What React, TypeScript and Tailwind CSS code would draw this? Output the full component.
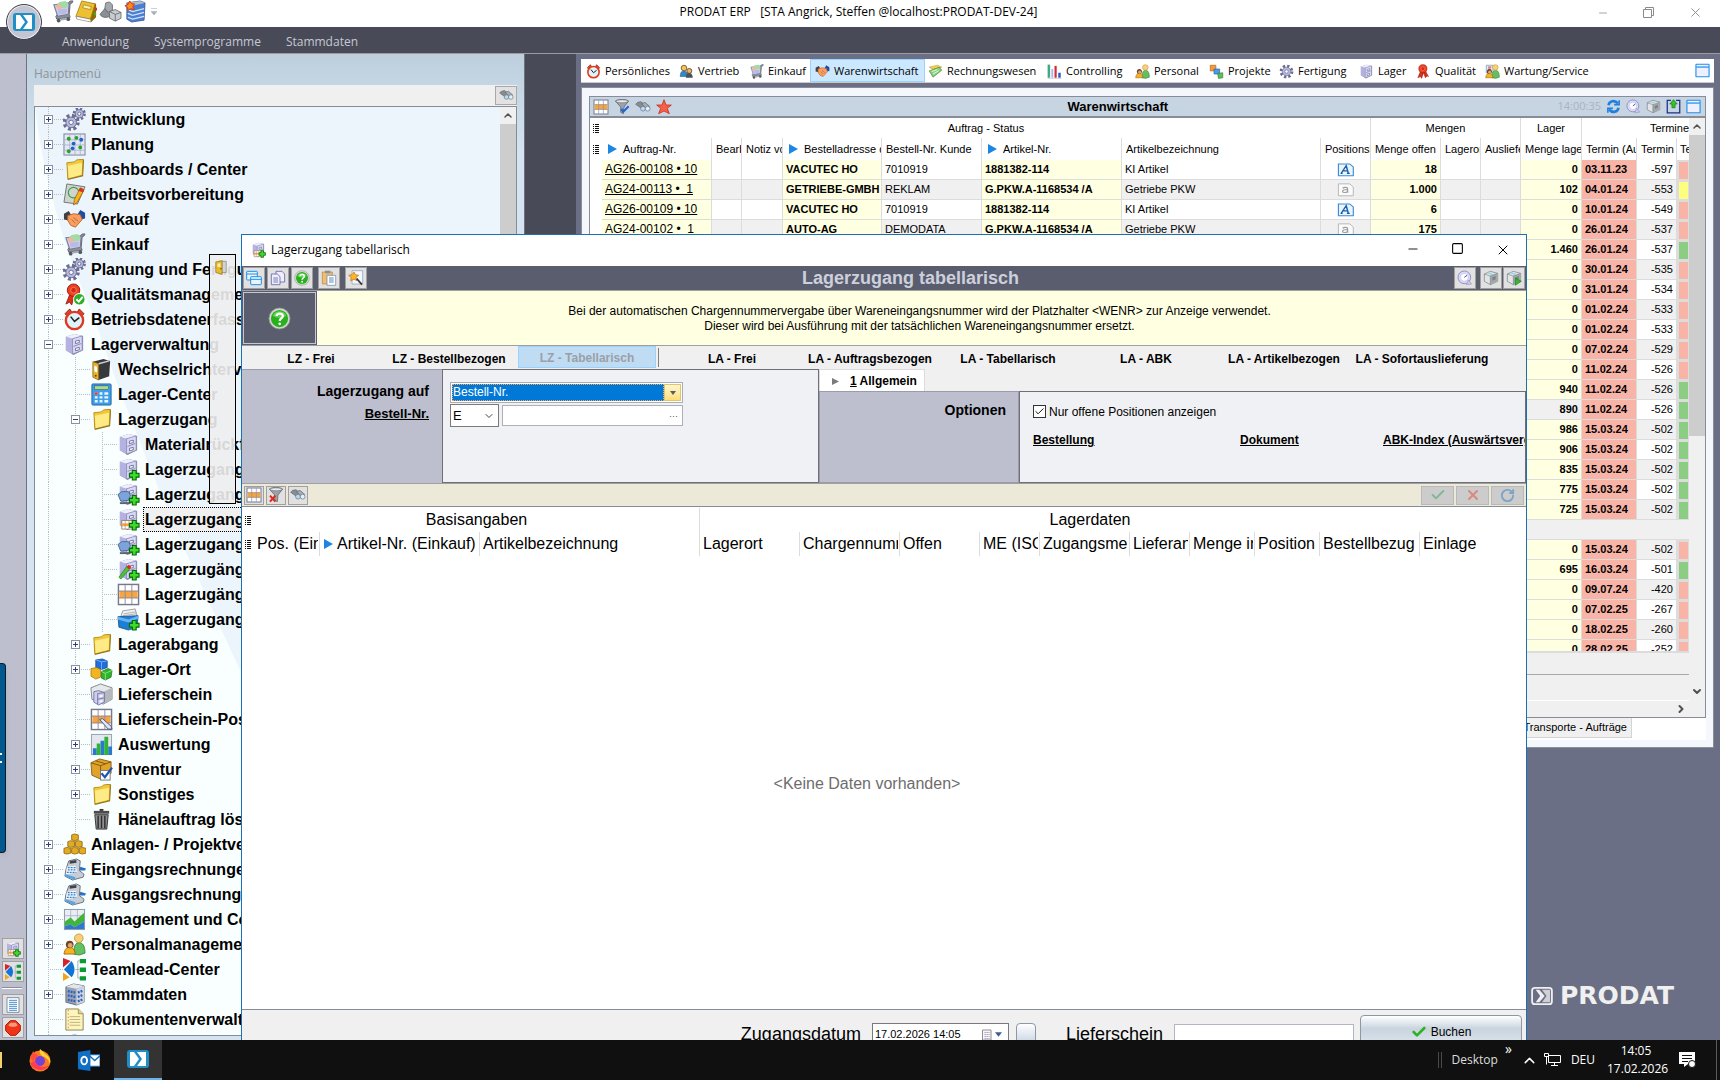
import React from 'react';
import { Check, ChevronDown, ChevronRight, ChevronUp, Minus, RotateCw, Square, X } from 'lucide-react';

/* ---------- Icon artwork (24 x 24) ---------- */

const cabinet = (
  <g>
    <path d="M3 4 12 1 21 3 21 18 11 23 3 18Z" fill="#8f90b4" />
    <path d="M3 4 10 6 10 22 3 18Z" fill="#b3b2e0" />
    <path d="M3 4 12 1 20 3 10 6Z" fill="#eeeeff" />
    <path d="M10 6 20 3 20 18 10 22Z" fill="#d9d8f8" stroke="#7f80a8" strokeWidth=".7" />
    <path d="M11 14 19 11" stroke="#8587b0" strokeWidth="1" />
    <path d="M13 8.500 17 7.500V10L13 11ZM13 16 17 15V17.500L13 18.500Z" fill="#fff" stroke="#55577c" strokeWidth=".8" />
  </g>
);

const greenPlus = (
  <path d="M16 13h4v3h3v4h-3v3h-4v-3h-3v-4h3z" fill="#3ddb2a" stroke="#0c6b0c" strokeWidth="1.2" />
);

const cart = (
  <g>
    <path d="M18 3 20 1 23 1 22 3 20 4 19 15 20 18 6 20 5 17Z" fill="#8b8f9a" stroke="#5b5f69" strokeWidth=".9" />
    <path d="M3 5 19 3 18 15 7 17Z" fill="#cfd1ea" stroke="#7a7d93" strokeWidth="1.2" />
    <path d="M5 6 9 2 15 1 18 4 17 8 7 9Z" fill="#9fdca6" />
    <path d="M5 6 10 4 11 9 7 10Z" fill="#f6b39d" />
    <path d="M7 10 17 9 16 14 8 15Z" fill="#b9bae6" />
    <circle cx="8" cy="21.500" r="2" fill="#55585f" />
    <circle cx="18" cy="20" r="2" fill="#55585f" />
    <path d="M10 20.500 16 19.500" stroke="#a6a9b2" strokeWidth="2" />
  </g>
);

const tableGrid = (
  <g>
    <rect x="1.500" y="1.500" width="21" height="21" fill="#fff" stroke="#77788c" strokeWidth="1.500" />
    <rect x="2.500" y="8" width="19" height="8" fill="#f9a53c" />
    <path d="M8.500 2v20M15.500 2v20M2 8.500h20M2 15.500h20" stroke="#8d8ea6" strokeWidth="1" />
  </g>
);

const folder = (
  <g>
    <path d="M4 5 13 4 14 2 21 1 22 2 21 19 5 23Z" fill="#8a6f1c" />
    <path d="M4 5 12 4 14 2 21 1.500 20 18 5 21.500Z" fill="#f2c93a" stroke="#b48a12" strokeWidth=".8" />
    <path d="M5 8 20 5 19.500 17.500 6 21Z" fill="#ffeb85" />
  </g>
);

const gear = (cx: number, cy: number, r: number) => (
  <g>
    <circle cx={cx} cy={cy} r={r} fill="none" stroke="#6c6d92" strokeWidth={r * 0.75} strokeDasharray={`${r * 0.42} ${r * 0.365}`} />
    <circle cx={cx} cy={cy} r={r * 0.85} fill="#b9b9dd" stroke="#6c6d92" strokeWidth="1" />
    <circle cx={cx} cy={cy} r={r * 0.35} fill="#f4f8ff" stroke="#6c6d92" strokeWidth="1" />
  </g>
);

const handshake = (
  <g>
    <path d="M1 6 6 3 9 8 6 13 1 12Z" fill="#3d4045" />
    <path d="M23 5 18 2 15 7 18 12 23 11Z" fill="#1c4da8" />
    <path d="M5 8 11 6 18 7 20 12 13 20 8 18 5 13Z" fill="#f7a062" stroke="#c4622b" strokeWidth="1" />
    <path d="M9 12 13 16M11 10 16 14" stroke="#c4622b" strokeWidth="1" />
  </g>
);

const ribbon = (
  <g>
    <path d="M7 12 3 22 7 20 9 23 12 14 15 22 18 19 20 20 15 11Z" fill="#d9301b" stroke="#8e1a0c" strokeWidth=".8" />
    <circle cx="11" cy="7.500" r="6.500" fill="#ee4023" stroke="#9c1d0d" strokeWidth="1" />
    <circle cx="11" cy="7.500" r="3" fill="#d12a15" stroke="#ff8c73" strokeWidth=".8" />
  </g>
);

const clock = (
  <g>
    <path d="M2 6 7 1 9 4 4 8ZM22 6 17 1 15 4 20 8Z" fill="#e8412a" stroke="#952012" />
    <circle cx="12" cy="13" r="9" fill="#dff3fb" stroke="#dd3a22" strokeWidth="2.500" />
    <path d="M8 9 12 14 17 10" stroke="#222" strokeWidth="1.600" fill="none" />
  </g>
);

const people = (
  <g>
    <path d="M11 22C11 12 14 10 17 10s6 3 6 11l-6 2Z" fill="#63bf5f" stroke="#2f7d32" strokeWidth=".8" />
    <circle cx="16.500" cy="5.500" r="4.500" fill="#f8cf7a" stroke="#c18f25" strokeWidth=".8" />
    <path d="M1 22C2 16 4 15 7 15s5 2 6 7Z" fill="#f2b51d" stroke="#a0520d" strokeWidth=".8" />
    <circle cx="7" cy="12" r="4" fill="#6c4526" />
    <circle cx="7.500" cy="13" r="2.500" fill="#e5a468" />
  </g>
);

const register = (
  <g>
    <path d="M6 3 14 1 18 3 17 13 22 17 21 20 10 23 2 19 3 12Z" fill="#c8ccd4" stroke="#5e6470" strokeWidth=".9" />
    <path d="M7 3 14 2 14 5 7 6Z" fill="#3e434b" />
    <path d="M4 9 13 8 15 15 3 17Z" fill="#f7f9fc" />
    <path d="M5 10h8M5 12.500h9M4 15h10" stroke="#2f7fd0" strokeWidth="1.300" strokeDasharray="2 1" />
    <path d="M3 17 13 20 12 23 2 19Z" fill="#55a4e6" />
    <path d="M18 9 24 11 23 13 17 13Z" fill="#2f6fc0" />
  </g>
);

const searchTwin = (
  <g>
    <path d="M1 8 4 5 9 4 15 9 11 15Z" fill="#868e94" stroke="#4d545a" strokeWidth=".8" />
    <path d="M10 7 15 5 22 11 18 16Z" fill="#a5acb1" stroke="#4d545a" strokeWidth=".8" />
    <circle cx="12" cy="14.500" r="3.600" fill="#b8dcf5" stroke="#666f78" strokeWidth="1" />
    <circle cx="19" cy="14.500" r="3.600" fill="#dff1fc" stroke="#666f78" strokeWidth="1" />
  </g>
);

const funnel = (
  <g>
    <path d="M2 3C6 0 18 0 22 3L15 12 14 22 10 20 10 12Z" fill="#9da2a8" stroke="#53585e" strokeWidth="1" />
    <ellipse cx="12" cy="3.500" rx="9" ry="2.200" fill="#e8eaec" stroke="#62676d" strokeWidth=".8" />
  </g>
);

const windowBlue = (
  <g>
    <rect x="1.500" y="2" width="21" height="20" rx="1" fill="#eef1fd" stroke="#1e90ee" strokeWidth="1.800" />
    <path d="M2 6.500h20" stroke="#1e90ee" strokeWidth="2" />
  </g>
);

const box = (
  <g>
    <path d="M2 6 11 2 22 5 22 17 11 22 2 17Z" fill="#e2e4e6" stroke="#73787c" strokeWidth="1" />
    <path d="M11 9 22 5V17L11 22Z" fill="#a3a8ac" />
    <path d="M2 6 11 9 22 5M11 9V22" stroke="#777c80" strokeWidth=".9" fill="none" />
    <path d="M14 11 19 9V14L14 16Z" fill="#7c8286" />
    <path d="M7 4 15 7" stroke="#8ed7e6" strokeWidth="2" />
  </g>
);

const history = (
  <g>
    <circle cx="11" cy="11" r="9.500" fill="#dcdcfa" stroke="#8a8bc0" strokeWidth="1.400" />
    <circle cx="11" cy="11" r="6" fill="#fff" stroke="#aaabdc" strokeWidth=".8" />
    <path d="M11 11 15 8" stroke="#4a4b86" strokeWidth="1.500" />
    <path d="M17 15 22 21 14 22Z" fill="#c9c9f0" stroke="#8a8bc0" strokeWidth=".8" />
  </g>
);

const chartLine = (
  <g>
    <rect x="1.500" y="1.500" width="21" height="21" fill="#e9eef5" stroke="#8d97a5" />
    <path d="M8 2v20M15 2v20M2 8h20" stroke="#a9b2c0" strokeWidth=".8" />
    <path d="M2 14 8 10 12 14 22 5V14L12 20 8 17 2 19Z" fill="#3fb53a" />
    <path d="M2 19 8 17 12 20 22 14V22H2Z" fill="#2f78d2" />
  </g>
);

const teamlead = (
  <g>
    <path d="M0 0 8 3 0 10Z" fill="#d8222b" />
    <path d="M0 24 7 20 0 15Z" fill="#f5a51c" />
    <path d="M9 3C13 9 13 15 9 20L1 12Z" fill="#1274d3" />
    <path d="M13 12H17M15.500 3V21M15.500 3h2M15.500 21h2" stroke="#aab" strokeWidth="1" />
    <path d="M17.500 1h6.500v4.500h-6.500zM17.500 10h6.500v4.500h-6.500zM17.500 19h6.500v4.500h-6.500z" fill="#0b9a34" />
  </g>
);

const helpBall = (
  <g>
    <circle cx="12" cy="12" r="11" fill="#d5d8d2" stroke="#8e938c" strokeWidth=".8" />
    <circle cx="12" cy="12" r="9" fill="#27b11c" />
    <path d="M5 9C7 3 17 3 19 9 15 12 9 12 5 9Z" fill="#7fdb6f" opacity=".7" />
    <path d="M9 9.500C9 6 15.500 6 15.500 9.500 15.500 12 12.200 11.500 12.200 14.500" stroke="#fff" strokeWidth="2.300" fill="none" />
    <circle cx="12.200" cy="17.600" r="1.400" fill="#fff" />
  </g>
);

const barBlocks = (
  <g>
    <rect x="1.500" y="1.500" width="21" height="21" fill="#e4e8ee" stroke="#99a1ad" />
    <path d="M3 16h4v7H3zM11 8h4v15h-4zM19 14h4v9h-4z" fill="#2a78cf" />
    <path d="M7 11h4v12H7zM15 4h4v19h-4z" fill="#31b33a" />
  </g>
);

const prodat = (
  <g>
    <rect x="1" y="3" width="22" height="18" rx="3" fill="#1f8fc6" />
    <path d="M4 5H8L13 12 8 19H4Z" fill="#fff" />
    <path d="M11 5H20V19H11L16 12Z" fill="#fff" />
  </g>
);

const ICONS: Record<string, React.ReactNode> = {
  cabinet,
  cart,
  table: tableGrid,
  folder,
  handshake,
  clock,
  people,
  register,
  search: searchTwin,
  window: windowBlue,
  box,
  history,
  chartLine,
  teamlead,
  help: helpBall,
  bars: barBlocks,
  prodat,
  ribbon,
  gear: gear(12, 12, 8),
  gears: <g>{gear(17, 6, 5)}{gear(8.5, 15, 6.5)}</g>,
  planning: (
    <g>
      <rect x="1" y="1" width="22" height="22" fill="#e3e6f3" stroke="#7c80a0" />
      <path d="M7 1v22M12.500 1v22M18 1v22M1 7h22M1 12.500h22M1 18h22" stroke="#a8accb" strokeWidth=".8" />
      <g fill="#24a51f"><circle cx="6" cy="6" r="2" /><circle cx="14" cy="5" r="2" /><circle cx="18" cy="15" r="2" /><circle cx="6" cy="19" r="2" /></g>
      <g fill="#1f63c8"><circle cx="19" cy="7" r="2" /><circle cx="11" cy="11" r="2" /><circle cx="10" cy="16" r="2" /></g>
    </g>
  ),
  drafting: (
    <g>
      <path d="M4 1 23 4 15 22 1 20Z" fill="#cfd4d0" stroke="#6f7671" strokeWidth="1" />
      <circle cx="11" cy="10" r="5.500" fill="none" stroke="#37a43a" strokeWidth="1.200" />
      <path d="M18 5 22 7 15 20 11 23 12 17Z" fill="#f7b41e" stroke="#9b6508" strokeWidth=".8" />
      <path d="M18 5 22 7 21 10 16 8Z" fill="#d8331e" />
    </g>
  ),
  quality: (
    <g>
      {ribbon}
      <circle cx="17" cy="17" r="6" fill="#2fae2a" stroke="#fff" strokeWidth="1" />
      <path d="M14 17 16.500 19.500 20.500 14.500" stroke="#fff" strokeWidth="2" fill="none" />
    </g>
  ),
  binder: (
    <g>
      <path d="M3 4 14 1 21 3 20 19 9 23 3 20Z" fill="#37393c" />
      <path d="M3 4 9 6 9 23 3 20Z" fill="#e9b22b" stroke="#8b6610" strokeWidth=".7" />
      <path d="M4.500 8 7.500 9V15L4.500 14Z" fill="#fff" />
      <path d="M9 6 20 3" stroke="#cfd2d6" strokeWidth="1.500" />
      <circle cx="6" cy="18.500" r="1" fill="#5f4707" />
    </g>
  ),
  calculator: (
    <g>
      <rect x="2" y="1" width="20" height="22" rx="1" fill="#3f9ee8" stroke="#1e66a8" />
      <rect x="4.500" y="3" width="15" height="4" fill="#a7dc8c" stroke="#336" strokeWidth=".5" />
      <path d="M5 11h3M10 11h3M15 11h4M5 15h3M10 15h3M15 15h4M5 19h3M10 19h3M15 19h4" stroke="#e9f5ff" strokeWidth="2.600" />
      <path d="M5 11h3" stroke="#e33a26" strokeWidth="2.600" />
    </g>
  ),
  cabinetPlus: <g>{cabinet}{greenPlus}</g>,
  cabinetCart: (
    <g>
      {cabinet}
      <path d="M1 12 5 9 12 9 14 13 12 18 4 19Z" fill="#7da4d8" stroke="#42629a" strokeWidth=".9" />
      <path d="M3 21h11" stroke="#5d636e" strokeWidth="2" />
      {greenPlus}
    </g>
  ),
  cabinetTable: (
    <g>
      {cabinet}
      <path d="M5 13h11v9H5z" fill="#fff" stroke="#8a6a4a" strokeWidth=".8" />
      <path d="M5 16h11v3H5z" fill="#f9a53c" />
      <path d="M8.500 13v9M12.500 13v9" stroke="#9a8f88" strokeWidth=".7" />
      {greenPlus}
    </g>
  ),
  cabinetPen: (
    <g>
      {cabinet}
      <path d="M2 20 10 9 13 12 4 22Z" fill="#4cc23c" stroke="#217a1b" strokeWidth=".7" />
      <path d="M10 9 12 7 15 9 13 12Z" fill="#e3261c" />
      {greenPlus}
    </g>
  ),
  fileBox: (
    <g>
      <path d="M4 9 6 3 19 1 21 9Z" fill="#f1f1f1" stroke="#888" strokeWidth=".8" />
      <path d="M7 6 20 4M6 8 20 6" stroke="#999" strokeWidth=".7" />
      <path d="M1 9 22 8 21 20 12 23 2 20Z" fill="#1f7fd3" stroke="#0e4f91" strokeWidth=".8" />
      <path d="M1 9 12 12 22 8V11L12 15 1 12Z" fill="#66b5f5" />
      {greenPlus}
    </g>
  ),
  cubes: (
    <g>
      <path d="M6 2 13 1 18 3 18 10 12 12 6 10Z" fill="#1f6edb" stroke="#0c3f88" strokeWidth=".7" />
      <path d="M6 2 12 4 18 3M12 4V12" stroke="#7db2ff" strokeWidth=".9" fill="none" />
      <path d="M1 11 7 10 11 12 11 20 6 22 1 19Z" fill="#f0b520" stroke="#9a6b05" strokeWidth=".7" />
      <path d="M12 14 19 11 23 13 22 20 16 23 12 21Z" fill="#2fb42c" stroke="#146a12" strokeWidth=".7" />
      <path d="M12 14 16 16 23 13M16 16V23" stroke="#8fec82" strokeWidth=".9" fill="none" />
    </g>
  ),
  delivery: (
    <g>
      <path d="M1 5 11 1 23 5 23 17 14 22 2 17Z" fill="#e6e8ea" stroke="#777b80" strokeWidth=".9" />
      <path d="M14 9 23 5V17L14 22Z" fill="#b5b9bd" />
      <path d="M4 9 9 8 15 10 15 20 9 23 4 20Z" fill="#cfceef" stroke="#6d6ea0" strokeWidth=".9" />
      <path d="M8 11 15 10M8 11V22M8 17 15 15.500" stroke="#6d6ea0" strokeWidth=".9" />
      <path d="M10 13 13 12.500V14L10 14.500ZM10 18.500 13 18V19.500L10 20Z" fill="#fff" />
    </g>
  ),
  tablePen: (
    <g>
      {tableGrid}
      <path d="M10 12 13 11 22 19 23 22 19 22Z" fill="#dfe5f2" stroke="#4b5678" strokeWidth="1" />
    </g>
  ),
  inventory: (
    <g>
      <path d="M1 5 10 1 22 4 22 16 11 22 2 18Z" fill="#e0a32b" stroke="#84590a" strokeWidth=".9" />
      <path d="M1 5 11 8 22 4M11 8V22M6 3 16 6" stroke="#84590a" strokeWidth="1" fill="none" />
      <rect x="11" y="13" width="10" height="10" fill="#fff" stroke="#777" />
      <path d="M12 16 15.500 20 23 10" stroke="#1c55b8" strokeWidth="2.300" fill="none" />
    </g>
  ),
  trash: (
    <g>
      <path d="M4 3h16v3H4z" fill="#4c4c4c" />
      <path d="M5 7h14l-1.500 15h-11z" fill="#8f8f8f" stroke="#333" strokeWidth="1" />
      <path d="M8.500 8v13M12 8v13M15.500 8v13" stroke="#2d2d2d" strokeWidth="1.500" />
      <path d="M10 1h4v2h-4z" fill="#333" />
    </g>
  ),
  bricks: (
    <g fill="#e3ab22" stroke="#8a5f06" strokeWidth=".8">
      <path d="M9 2 12 1 16 2 16 7 12 8 9 7ZM5 9 8 8 12 9 12 14 8 15 5 14ZM13 9 16 8 20 9 20 14 16 15 13 14ZM1 16 4 15 8 16 8 21 4 22 1 21ZM9 16 12 15 16 16 16 21 12 22 9 21ZM17 16 20 15 24 16 24 21 20 22 17 21Z" />
    </g>
  ),
  building: (
    <g>
      <path d="M3 4 11 1 22 3 22 20 14 23 3 20Z" fill="#9aa1b0" stroke="#5f6675" strokeWidth=".9" />
      <path d="M3 4 11 1 22 3 14 6Z" fill="#e3e6ec" />
      <path d="M14 6 22 3V20L14 23Z" fill="#cdd2dc" />
      <path d="M5 8.500 13 10M5 13 13 14.500M5 17.500 13 19" stroke="#2a62c4" strokeWidth="2.400" strokeDasharray="2 1" />
      <path d="M15.500 10 21 8M15.500 14.500 21 12.500M15.500 19 21 17" stroke="#2a62c4" strokeWidth="2.400" strokeDasharray="2 1" />
    </g>
  ),
  note: (
    <g>
      <path d="M3 1h13l5 5v17H3z" fill="#fdf5bd" stroke="#8d8350" strokeWidth="1" />
      <path d="M16 1v5h5" fill="#e0d589" stroke="#8d8350" strokeWidth=".8" />
      <path d="M7 9h11M7 12h11M7 15h11M7 18h11" stroke="#b5ab72" strokeWidth=".9" />
      <path d="M5.500 2v20" stroke="#d3685a" strokeWidth=".8" strokeDasharray="1.500 2" />
    </g>
  ),
  globe: (
    <g>
      <circle cx="12" cy="12" r="10" fill="#dfe2fb" stroke="#7b7fb8" />
      <path d="M5 8C9 4 15 4 19 8" stroke="#7b7fb8" strokeWidth="2" fill="none" />
    </g>
  ),
  book: (
    <g>
      <path d="M7 2 22 4 22 18 17 23 1 19Z" fill="#8f6a0b" />
      <path d="M7 1 21 4 16 20 1 17Z" fill="#ecc02f" stroke="#a07710" strokeWidth=".8" />
      <path d="M1 17 16 20 17 23 2 20Z" fill="#fff" stroke="#777" strokeWidth=".6" />
      <path d="M9 5 17 7 16 10 8 8Z" fill="#fdf3b8" stroke="#9c7a17" strokeWidth=".7" />
      <path d="M21 8h2v3h-2z" fill="#e0322a" />
      <path d="M20 13h2v3h-2z" fill="#35b02c" />
    </g>
  ),
  solids: (
    <g stroke="#5c6064" strokeWidth=".8">
      <path d="M7 3 11 2 14 5 14 11 9 13 6 9Z" fill="#a5aaaf" />
      <path d="M1 15 6 9 12 16C10 19 3 19 1 15Z" fill="#8b9095" />
      <path d="M11 12 17 10 23 13 23 19 17 22 11 19Z" fill="#c8ccd0" />
      <path d="M11 12 17 15 23 13M17 15V22" fill="none" />
    </g>
  ),
  server: (
    <g>
      <path d="M4 3 18 1 23 3 22 21 9 23 4 20Z" fill="#4b7fd0" stroke="#30548f" strokeWidth=".8" />
      <path d="M4 3 18 1 23 3 9 6Z" fill="#b3bccb" />
      <path d="M5 10 10 12 22 9M5 14 10 16 22 13M5 18 10 20 22 17" stroke="#cfe2ff" strokeWidth="1.300" fill="none" />
      <path d="M7 1 9 4 12 4 10 7 12 10 8 9 5 11 5 8 2 6 5 5Z" fill="#ff8a1e" stroke="#d33a10" strokeWidth="1" />
    </g>
  ),
  money: (
    <g>
      <path d="M2 5 15 2 22 5 9 9Z" fill="#f6d24e" stroke="#9d7d18" strokeWidth=".7" />
      <path d="M2 11 18 5 22 10 8 21Z" fill="#8ad17c" stroke="#3d7d35" strokeWidth="1" />
      <path d="M6 12 15 9M8 16 17 11" stroke="#e9ffe2" strokeWidth="1.500" />
    </g>
  ),
  controlling: (
    <g>
      <path d="M1 1h4v21H1z" fill="#41a68a" />
      <path d="M7 8h3v14H7z" fill="#a9b8e8" />
      <path d="M12 3h3.500v19H12z" fill="#cf2c38" />
      <path d="M18 14h4v8h-4z" fill="#2f5bc8" />
      <path d="M1 23h22" stroke="#bbb" />
    </g>
  ),
  project: (
    <g>
      <path d="M2 2h9v9H2z" fill="#f29c38" stroke="#b35a0e" />
      <path d="M8 8h9v8H8z" fill="#4e9be8" stroke="#1f5fa5" />
      <path d="M14 15 22 14 22 22 15 23Z" fill="#5fc05a" stroke="#2a7c2a" />
    </g>
  ),
  service: (
    <g>
      <path d="M2 2h11v12H2z" fill="#dfeaf7" stroke="#6b86ab" />
      <path d="M5 5h5M5 8h4" stroke="#c33" strokeWidth="1.500" />
      {people}
    </g>
  ),
  vertrieb: (
    <g>
      <path d="M2 20C2 12 5 11 8 11s6 2 6 9Z" fill="#2f86c9" stroke="#145184" strokeWidth=".8" />
      <circle cx="8" cy="6.500" r="4.500" fill="#f2c35f" stroke="#6a4413" strokeWidth="1.200" />
      <path d="M11 22C11 15 14 14 16 14s6 2 6 8Z" fill="#48525c" />
      <circle cx="16.500" cy="11" r="4" fill="#e8b56c" stroke="#5a3a17" strokeWidth="1.200" />
    </g>
  ),
  funnelCheck: <g>{funnel}<path d="M11 15 14 19 22 11" stroke="#1f66d0" strokeWidth="3.200" fill="none" /></g>,
  funnelClear: <g>{funnel}<path d="M3 13 11 22M11 13 3 22" stroke="#dc2a1c" strokeWidth="3" /></g>,
  star: <path d="M12 1 15 9 23 9 17 14 20 22 12 18 4 22 7 14 1 9 9 9Z" fill="#f4604a" stroke="#cc2b18" strokeWidth="1.200" />,
  refresh: (
    <g fill="none" stroke="#1d7fe0" strokeWidth="4">
      <path d="M4 10C5 3 14 1 19 7M20 14C19 21 10 23 5 17" />
      <path d="M21 2v7h-8M3 22v-7h8" strokeWidth="2.500" />
    </g>
  ),
  exportUp: (
    <g>
      <path d="M8 2H2V22H22V2H16" fill="none" stroke="#1c2e8a" strokeWidth="2" />
      <path d="M12 1 18 8H14.500V14H9.500V8H6Z" fill="#35c529" stroke="#11680f" strokeWidth="1" />
    </g>
  ),
  windows: (
    <g fill="#e9f4fd" stroke="#1e90ee" strokeWidth="1.500">
      <rect x="1" y="2" width="16" height="13" rx="1" />
      <path d="M1 6h16" />
      <rect x="7" y="10" width="16" height="12" rx="1" />
      <path d="M7 14h16" />
    </g>
  ),
  copy: (
    <g fill="#eeeeff" stroke="#5f61a0" strokeWidth="1.200">
      <path d="M9 2h9l4 4v12H9z" />
      <path d="M2 6h9l4 4v12H2z" />
      <path d="M5 12h7M5 15h7M5 18h7" />
    </g>
  ),
  paste: (
    <g>
      <path d="M2 3h15v18H2z" fill="#f0bd73" stroke="#b98237" />
      <path d="M6 1h8v4H6z" fill="#8c9096" />
      <path d="M9 8h13v15H9z" fill="#fff" stroke="#5d80a8" />
      <path d="M12 12h7M12 15h7M12 18h7" stroke="#3f77bc" strokeWidth="1.300" />
    </g>
  ),
  wizard: (
    <g>
      <path d="M6 1h16v20H6z" fill="#f4f7fb" stroke="#7f97b5" />
      <path d="M9 3 11 7 16 8 12 11 13 16 9 14 4 16 5 11 1 8 6 7Z" fill="#ffb52b" stroke="#bb6e05" />
      <path d="M13 13 21 22" stroke="#30353c" strokeWidth="2.500" />
    </g>
  ),
  boxPlay: <g>{box}<path d="M14 12 23 17 14 23Z" fill="#38b92b" stroke="#176b12" strokeWidth=".8" /></g>,
  door: (
    <g>
      <path d="M9 2h12v18H9z" fill="#cfd2d6" stroke="#777" />
      <path d="M3 3 14 1V23L3 20Z" fill="#e8b92c" stroke="#86640a" />
      <path d="M6 6 11 5V11L6 11Z" fill="#fff0a8" />
      <circle cx="12" cy="14" r="1.200" fill="#5b4407" />
    </g>
  ),
  listDoc: (
    <g>
      <path d="M3 1h18v22H3z" fill="#fff" stroke="#68829e" strokeWidth="1.300" />
      <path d="M6 5h12M6 8h12M6 11h12M6 14h12M6 17h12M6 20h12" stroke="#3f86c8" strokeWidth="1.400" />
    </g>
  ),
  record: (
    <g>
      <path d="M8 1h8l7 7v8l-7 7H8l-7-7V8z" fill="#ef3417" stroke="#aa1c08" strokeWidth="1.500" />
      <path d="M8 4h8l3 4c-4 3-10 3-14 0z" fill="#ff9a80" />
    </g>
  ),
  firefox: (
    <g>
      <circle cx="12" cy="13" r="10.500" fill="#ff7a1a" />
      <path d="M12 1C14 3 16 4 17 6 21 8 23 12 22 16 20 10 17 9 14 8 12 6 11 4 12 1Z" fill="#ffd33a" />
      <path d="M2 9C3 6 5 5 5 3 6 5 8 6 10 7L5 14Z" fill="#ff4f3a" />
      <circle cx="12" cy="13" r="5" fill="#7442d8" />
      <path d="M2 15C5 23 17 25 21 17 17 20 10 20 7 13Z" fill="#ff3d54" />
    </g>
  ),
  outlook: (
    <g>
      <path d="M13 6h11v12H13z" fill="#fff" stroke="#0f6fc6" />
      <path d="M13 7 18.500 12 24 7" stroke="#0f6fc6" strokeWidth="1.500" fill="none" />
      <path d="M1 3 14 1V23L1 21Z" fill="#0f6fc6" />
      <ellipse cx="7.500" cy="12" rx="3" ry="4" fill="none" stroke="#fff" strokeWidth="2" />
    </g>
  ),
  noteActive: (
    <g>
      <path d="M2 3h16l5 5v14H2z" fill="#eaf4fd" stroke="#3a8ada" strokeWidth="1.600" />
      <path d="M6 18 13 6 16 18M8 14h8M5 18h3M14 18h4" stroke="#1d5fa8" strokeWidth="2" fill="none" />
    </g>
  ),
  noteIdle: (
    <g>
      <path d="M2 3h16l5 5v14H2z" fill="#fafafa" stroke="#b5b5b5" strokeWidth="1.400" />
      <path d="M8 10C10 8 15 8 15 11V17M15 12C10 12 8 13 8 15S13 18 15 15" stroke="#9c9c9c" strokeWidth="1.800" fill="none" />
    </g>
  ),
  calendar: (
    <g>
      <path d="M3 2h17v20H3z" fill="#f7f7fb" stroke="#9a8a8a" strokeWidth="2" />
      <path d="M7 7h10M7 11h10M7 15h10M7 19h10" stroke="#8f9bb8" strokeWidth="2" strokeDasharray="2.500 1.500" />
    </g>
  ),
};

function Icon({ name, className = 'w-4 h-4' }: { name: string; className?: string }) {
  return (
    <svg viewBox="0 0 24 24" preserveAspectRatio="none" className={`shrink-0 ${className}`} aria-hidden="true">
      {ICONS[name]}
    </svg>
  );
}

function GridHandle() {
  return (
    <svg viewBox="0 0 6 9" className="w-[6px] h-[9px] mx-auto" aria-hidden="true">
      <path d="M2 .5h4M2 2.500h4M2 4.500h4M2 6.500h4M2 8.500h4" stroke="#111" />
      <path d="M.5 0v9" stroke="#111" strokeDasharray="1 1" />
    </svg>
  );
}

function Arrow() {
  return (
    <svg viewBox="0 0 10 10" className="w-[10px] h-[10px] shrink-0" aria-hidden="true">
      <path d="M1 0 10 5 1 10Z" fill="#1b86e3" />
    </svg>
  );
}

/* ---------- Main menu tree ---------- */

interface TreeItem {
  label: string;
  icon: string;
  level: number;
  toggle?: '+' | '-';
  selected?: boolean;
}

const TREE: TreeItem[] = [
  { label: 'Entwicklung', icon: 'gears', level: 0, toggle: '+' },
  { label: 'Planung', icon: 'planning', level: 0, toggle: '+' },
  { label: 'Dashboards / Center', icon: 'folder', level: 0, toggle: '+' },
  { label: 'Arbeitsvorbereitung', icon: 'drafting', level: 0, toggle: '+' },
  { label: 'Verkauf', icon: 'handshake', level: 0, toggle: '+' },
  { label: 'Einkauf', icon: 'cart', level: 0, toggle: '+' },
  { label: 'Planung und Fertigung', icon: 'gears', level: 0, toggle: '+' },
  { label: 'Qualitätsmanagement', icon: 'quality', level: 0, toggle: '+' },
  { label: 'Betriebsdatenerfassung', icon: 'clock', level: 0, toggle: '+' },
  { label: 'Lagerverwaltung', icon: 'cabinet', level: 0, toggle: '-' },
  { label: 'Wechselrichterverwaltung', icon: 'binder', level: 1 },
  { label: 'Lager-Center', icon: 'calculator', level: 1 },
  { label: 'Lagerzugang', icon: 'folder', level: 1, toggle: '-' },
  { label: 'Materialrückführung', icon: 'cabinet', level: 2 },
  { label: 'Lagerzugang frei', icon: 'cabinetPlus', level: 2 },
  { label: 'Lagerzugang Bestellung', icon: 'cabinetCart', level: 2 },
  { label: 'Lagerzugang tabellarisch', icon: 'cabinetTable', level: 2, selected: true },
  { label: 'Lagerzugang Einkauf', icon: 'cabinetCart', level: 2 },
  { label: 'Lagerzugänge bearbeiten', icon: 'cabinetPen', level: 2 },
  { label: 'Lagerzugänge Liste', icon: 'table', level: 2 },
  { label: 'Lagerzugang Archiv', icon: 'fileBox', level: 2 },
  { label: 'Lagerabgang', icon: 'folder', level: 1, toggle: '+' },
  { label: 'Lager-Ort', icon: 'cubes', level: 1, toggle: '+' },
  { label: 'Lieferschein', icon: 'delivery', level: 1 },
  { label: 'Lieferschein-Positionen', icon: 'tablePen', level: 1 },
  { label: 'Auswertung', icon: 'bars', level: 1, toggle: '+' },
  { label: 'Inventur', icon: 'inventory', level: 1, toggle: '+' },
  { label: 'Sonstiges', icon: 'folder', level: 1, toggle: '+' },
  { label: 'Hänelauftrag löschen', icon: 'trash', level: 1 },
  { label: 'Anlagen- / Projektverwaltung', icon: 'bricks', level: 0, toggle: '+' },
  { label: 'Eingangsrechnungen', icon: 'register', level: 0, toggle: '+' },
  { label: 'Ausgangsrechnungen', icon: 'register', level: 0, toggle: '+' },
  { label: 'Management und Controlling', icon: 'chartLine', level: 0, toggle: '+' },
  { label: 'Personalmanagement', icon: 'people', level: 0, toggle: '+' },
  { label: 'Teamlead-Center', icon: 'teamlead', level: 0 },
  { label: 'Stammdaten', icon: 'building', level: 0, toggle: '+' },
  { label: 'Dokumentenverwaltung', icon: 'note', level: 0 },
  { label: '', icon: 'globe', level: 0 },
];

function TreeRow({ item }: { item: TreeItem }) {
  return (
    <li className="flex h-[25px] shrink-0 items-center pl-[9px]">
      {Array.from({ length: item.level }, (_, i) => (
        <span key={i} className="w-[27px] h-full pl-1">
          <span className="block w-px h-full border-l border-dotted border-[#b9bcc4]" />
        </span>
      ))}
      <span className="relative flex items-center w-[19px] h-full">
        <span className="absolute left-1 inset-y-0 border-l border-dotted border-[#b9bcc4]" />
        <span className="absolute left-1 right-0 border-t border-dotted border-[#b9bcc4]" />
        {item.toggle && (
          <button
            aria-label={`${item.label} ${item.toggle === '+' ? 'öffnen' : 'schließen'}`}
            className="relative flex w-[9px] h-[9px] items-center justify-center border border-[#8d919c] bg-white"
          >
            <span className="absolute w-[5px] h-px bg-[#2b3f86]" />
            {item.toggle === '+' && <span className="absolute w-px h-[5px] bg-[#2b3f86]" />}
          </button>
        )}
      </span>
      <Icon name={item.icon} className="w-[23px] h-[23px]" />
      <span
        className={`ml-[3px] flex items-center h-full pl-px whitespace-nowrap text-[16px] font-bold text-black border border-dotted ${
          item.selected ? 'w-[200px] border-black bg-[#f0f0f0]' : 'border-transparent'
        }`}
      >
        {item.label}
      </span>
    </li>
  );
}

function MainMenu() {
  return (
    <aside className="flex flex-col w-[499px] shrink-0 border-x border-[#6d7280] bg-gradient-to-b from-[#bdcfdd] to-[#d6e3f0] to-10% px-[7px]">
      <h2 className="h-[31px] pt-3 text-[12px] leading-[16px] text-[#8e9299] font-['Open_Sans',sans-serif]">Hauptmenü</h2>
      <div className="flex h-[21px] items-center bg-[#f0f0f0]">
        <input aria-label="Menü durchsuchen" className="flex-1 h-full bg-transparent outline-none" />
        <button aria-label="Suchen" className="flex w-[22px] h-[19px] items-center justify-center border border-[#a8a8a8] bg-[#e2e2e2]">
          <Icon name="search" className="w-[15px] h-[15px]" />
        </button>
      </div>
      <div className="relative flex flex-1 min-h-0 mb-1 border border-[#848b99] bg-[#ecf5fc] overflow-hidden">
        <svg viewBox="0 0 460 930" className="absolute left-0 top-0 w-[460px] h-[930px]" aria-hidden="true">
          <path d="M0 0C8 70 30 145 57 204 80 275 118 370 153 450 190 525 210 590 260 650L330 930H0Z" fill="#f8fffe" />
        </svg>
        <ul className="relative flex-1 min-w-0 overflow-hidden">
          {TREE.map((item, i) => (
            <TreeRow key={i} item={item} />
          ))}
        </ul>
        <div className="relative flex w-4 flex-col items-center bg-[#f0f0f0]">
          <ChevronUp className="w-3 h-[17px] text-[#505050]" strokeWidth={3} />
          <div className="w-full flex-1 bg-[#cdcdcd]" />
        </div>
      </div>
    </aside>
  );
}

/* ---------- Warenwirtschaft window ---------- */

const MODULES = [
  { label: 'Persönliches', icon: 'clock', width: 'w-[93px]' },
  { label: 'Vertrieb', icon: 'vertrieb', width: 'w-[70px]' },
  { label: 'Einkauf', icon: 'cart', width: 'w-[64px]' },
  { label: 'Warenwirtschaft', icon: 'handshake', width: 'w-[115px]', active: true },
  { label: 'Rechnungswesen', icon: 'money', width: 'w-[119px]' },
  { label: 'Controlling', icon: 'controlling', width: 'w-[88px]' },
  { label: 'Personal', icon: 'people', width: 'w-[74px]' },
  { label: 'Projekte', icon: 'project', width: 'w-[70px]' },
  { label: 'Fertigung', icon: 'gear', width: 'w-[80px]' },
  { label: 'Lager', icon: 'cabinet', width: 'w-[57px]' },
  { label: 'Qualität', icon: 'ribbon', width: 'w-[69px]' },
  { label: 'Wartung/Service', icon: 'service', width: 'w-[120px]' },
];

type Tone = 'red' | 'yellow' | 'green';

interface OrderRow {
  order?: string;
  address?: string;
  customerNo?: string;
  article?: string;
  name?: string;
  note?: string;
  open?: string;
  stock: string;
  date: string;
  days: string;
  tone: Tone;
}

const ORDERS: (OrderRow | null)[] = [
  { order: 'AG26-00108 • 10', address: 'VACUTEC HO', customerNo: '7010919', article: '1881382-114', name: 'KI Artikel', note: 'noteActive', open: '18', stock: '0', date: '03.11.23', days: '-597', tone: 'red' },
  { order: 'AG24-00113 •  1', address: 'GETRIEBE-GMBH', customerNo: 'REKLAM', article: 'G.PKW.A-1168534 /A', name: 'Getriebe PKW', note: 'noteIdle', open: '1.000', stock: '102', date: '04.01.24', days: '-553', tone: 'yellow' },
  { order: 'AG26-00109 • 10', address: 'VACUTEC HO', customerNo: '7010919', article: '1881382-114', name: 'KI Artikel', note: 'noteActive', open: '6', stock: '0', date: '10.01.24', days: '-549', tone: 'red' },
  { order: 'AG24-00102 •  1', address: 'AUTO-AG', customerNo: 'DEMODATA', article: 'G.PKW.A-1168534 /A', name: 'Getriebe PKW', note: 'noteIdle', open: '175', stock: '0', date: '26.01.24', days: '-537', tone: 'red' },
  { stock: '1.460', date: '26.01.24', days: '-537', tone: 'green' },
  { stock: '0', date: '30.01.24', days: '-535', tone: 'red' },
  { stock: '0', date: '31.01.24', days: '-534', tone: 'red' },
  { stock: '0', date: '01.02.24', days: '-533', tone: 'red' },
  { stock: '0', date: '01.02.24', days: '-533', tone: 'red' },
  { stock: '0', date: '07.02.24', days: '-529', tone: 'red' },
  { stock: '0', date: '11.02.24', days: '-526', tone: 'red' },
  { stock: '940', date: '11.02.24', days: '-526', tone: 'green' },
  { stock: '890', date: '11.02.24', days: '-526', tone: 'green' },
  { stock: '986', date: '15.03.24', days: '-502', tone: 'green' },
  { stock: '906', date: '15.03.24', days: '-502', tone: 'green' },
  { stock: '835', date: '15.03.24', days: '-502', tone: 'green' },
  { stock: '775', date: '15.03.24', days: '-502', tone: 'green' },
  { stock: '725', date: '15.03.24', days: '-502', tone: 'green' },
  null,
  { stock: '0', date: '15.03.24', days: '-502', tone: 'red' },
  { stock: '695', date: '16.03.24', days: '-501', tone: 'green' },
  { stock: '0', date: '09.07.24', days: '-420', tone: 'red' },
  { stock: '0', date: '07.02.25', days: '-267', tone: 'red' },
  { stock: '0', date: '18.02.25', days: '-260', tone: 'red' },
  { stock: '0', date: '28.02.25', days: '-252', tone: 'red' },
];

const TONES: Record<Tone, string> = {
  red: 'bg-[#f8b4a6]',
  yellow: 'bg-[#ffff7f]',
  green: 'bg-[#8bcd83]',
};

const CELL = 'h-5 px-[3px] border-r border-b border-[#dcdcdc] overflow-hidden';
const HEAD = 'h-[22px] pl-1 border-r border-[#dcdcdc] font-normal text-left overflow-hidden';

function OrdersTable() {
  return (
    <table className="w-full table-fixed border-separate border-spacing-0 text-[11px] leading-[15px] whitespace-nowrap">
      <colgroup>
        <col className="w-[12px]" />
        <col className="w-[110px]" />
        <col className="w-[30px]" />
        <col className="w-[41px]" />
        <col className="w-[99px]" />
        <col className="w-[100px]" />
        <col className="w-[140px]" />
        <col />
        <col className="w-[50px]" />
        <col className="w-[70px]" />
        <col className="w-[40px]" />
        <col className="w-[40px]" />
        <col className="w-[61px]" />
        <col className="w-[55px]" />
        <col className="w-[40px]" />
        <col className="w-[12px]" />
      </colgroup>
      <thead className="bg-white">
        <tr>
          <th className="h-5"><GridHandle /></th>
          <th colSpan={8} className="h-5 border-r border-[#dcdcdc] font-normal">Auftrag - Status</th>
          <th colSpan={3} className="border-r border-[#dcdcdc] font-normal">Mengen</th>
          <th className="border-r border-[#dcdcdc] font-normal">Lager</th>
          <th colSpan={3} className="font-normal text-right">Termine</th>
        </tr>
        <tr>
          <th className="h-[22px]"><GridHandle /></th>
          <th className={HEAD}><span className="flex items-center gap-[6px] pl-px"><Arrow />Auftrag-Nr.</span></th>
          <th className={HEAD}>Bearbeiter</th>
          <th className={HEAD}>Notiz vorhanden</th>
          <th className={HEAD}><span className="flex items-center gap-[6px] pl-px"><Arrow />Bestelladresse des</span></th>
          <th className={HEAD}>Bestell-Nr. Kunde</th>
          <th className={HEAD}><span className="flex items-center gap-[6px] pl-px"><Arrow />Artikel-Nr.</span></th>
          <th className={HEAD}>Artikelbezeichnung</th>
          <th className={HEAD}>Positionsl.</th>
          <th className={HEAD}>Menge offen</th>
          <th className={HEAD}>Lagerort</th>
          <th className={HEAD}>Auslieferung</th>
          <th className={HEAD}>Menge lagernd</th>
          <th className={HEAD}>Termin (Auftrag)</th>
          <th className={HEAD}>Termin</th>
          <th className="pl-[3px] font-normal text-left overflow-hidden">Termin</th>
        </tr>
      </thead>
      <tbody>
        {ORDERS.map((row, i) =>
          row ? (
            <tr key={i} className={i % 2 ? 'bg-[#f0f0f0]' : 'bg-white'}>
              <td className="bg-white" />
              <td className={`${CELL} bg-[#ffffe1]`}>
                {row.order && <a href="#" className="text-[12px] underline whitespace-pre">{row.order}</a>}
              </td>
              <td className={CELL} />
              <td className={CELL} />
              <td className={`${CELL} bg-[#ffffe1] font-bold`}>{row.address}</td>
              <td className={CELL}>{row.customerNo}</td>
              <td className={`${CELL} bg-[#ffffe1] font-bold`}>{row.article}</td>
              <td className={CELL}>{row.name}</td>
              <td className={CELL}>{row.note && <Icon name={row.note} className="w-[17px] h-[15px] mx-auto" />}</td>
              <td className={`${CELL} bg-[#ffffe1] font-bold text-right`}>{row.open}</td>
              <td className={CELL} />
              <td className={CELL} />
              <td className={`${CELL} ${i === 12 ? 'bg-[#f0f0f0]' : 'bg-[#ffffe1]'} font-bold text-right`}>{row.stock}</td>
              <td className={`${CELL} bg-[#f8b4a6] font-bold`}>{row.date}</td>
              <td className={`${CELL} text-right`}>{row.days}</td>
              <td className="h-5 p-px pl-0.5 bg-[#dcdcdc]"><span className={`block h-[17px] ${TONES[row.tone]}`} /></td>
            </tr>
          ) : (
            <tr key={i}>
              <td className="h-5 border-b border-[#dcdcdc] bg-[#f0f0f0]" colSpan={16} />
            </tr>
          ),
        )}
      </tbody>
    </table>
  );
}

function ModuleArea() {
  return (
    <main className="flex-1 min-w-0 bg-[#6b6f85] pl-[5px] pr-[6px] pt-[5px]">
      <nav className="flex h-6 items-stretch bg-white border-b border-[#c9c9c9] pl-[2px] text-[12px] font-['Open_Sans',sans-serif] text-black">
        {MODULES.map((m) => (
          <button
            key={m.label}
            className={`flex shrink-0 items-center gap-1 whitespace-nowrap text-[11px] ${m.width} ${
              m.active ? 'bg-[#cce8ff] border border-[#99d1ff] pt-px pl-1' : 'pl-[3px] pt-px'
            }`}
          >
            <Icon name={m.icon} className="w-[15px] h-[15px]" />
            {m.label}
          </button>
        ))}
        <button aria-label="Fenster" className="ml-auto mr-1 flex items-center">
          <Icon name="window" className="w-[15px] h-[15px]" />
        </button>
      </nav>

      <section className="mt-1 flex h-[661px] flex-col border border-[#8b8e99] bg-[#f4f8fd] px-[7px] pt-2 pb-[7px]">
        <header className="flex h-[21px] shrink-0 items-center border border-[#868c98] bg-[#c7d4e2] pl-[3px] pr-1">
          <div className="flex items-center gap-[5px]">
            <button aria-label="Tabelle"><Icon name="table" /></button>
            <button aria-label="Filter"><Icon name="funnelCheck" /></button>
            <button aria-label="Suchen"><Icon name="search" /></button>
            <button aria-label="Favorit"><Icon name="star" /></button>
          </div>
          <h2 className="flex-1 text-center text-[13px] font-bold pl-[6px]">Warenwirtschaft</h2>
          <span className="mr-[5px] text-[11px] text-[#a9b3bf] font-['Open_Sans',sans-serif]">14:00:35</span>
          <div className="flex items-center gap-[5px]">
            <button aria-label="Aktualisieren"><Icon name="refresh" className="w-[15px] h-[15px]" /></button>
            <button aria-label="Verlauf"><Icon name="history" className="w-[15px] h-[15px]" /></button>
            <button aria-label="Drucken"><Icon name="box" className="w-[15px] h-[15px]" /></button>
            <button aria-label="Exportieren"><Icon name="exportUp" className="w-[15px] h-[15px]" /></button>
            <button aria-label="Fenster"><Icon name="window" className="w-[15px] h-[15px]" /></button>
          </div>
        </header>
        <div className="flex flex-1 min-h-0 border border-[#868c98] bg-[#f0f0f0]">
          <div className="flex flex-1 min-w-0 flex-col">
            <div className="flex-1 min-h-0 overflow-hidden bg-white">
              <OrdersTable />
            </div>
            <div className="h-[24px] border-t-2 border-b border-t-[#dcdcdc] border-b-[#a9a9a9]" />
            <div className="h-[26px] border-b border-white" />
            <div className="flex h-4 items-center justify-end pr-[2px]">
              <ChevronRight className="w-3 h-3 text-[#505050]" strokeWidth={4} />
            </div>
          </div>
          <div className="flex w-4 flex-col items-center">
            <ChevronUp className="w-3 h-[17px] text-[#505050]" strokeWidth={3} />
            <div className="h-[301px] w-full bg-[#cdcdcd]" />
            <ChevronDown className="mt-auto mb-[17px] w-3 h-[17px] text-[#505050]" strokeWidth={4} />
          </div>
        </div>
        <div className="flex h-[22px] shrink-0 items-start bg-white">
          <button className="ml-auto mr-[74px] h-5 border border-t-0 border-[#d4d4d4] bg-[#f0f0f0] px-1 text-[11px]">
            Transporte - Aufträge
          </button>
        </div>
      </section>

      <div className="mt-[236px] mr-[40px] flex items-center justify-end gap-[6px] text-[#f0f0f0]">
        <svg viewBox="0 0 24 20" className="w-6 h-[18px]" aria-hidden="true">
          <rect x="1" y="1" width="22" height="18" rx="3" fill="none" stroke="currentColor" strokeWidth="2" />
          <path d="M5 3h4l6 7-6 7H5l5-7z" fill="currentColor" />
          <path d="M12 3h9v14h-9l5-7z" fill="currentColor" opacity=".75" />
        </svg>
        <span className="text-[25px] leading-6 font-bold font-['DejaVu_Sans',sans-serif]">PRODAT</span>
      </div>
    </main>
  );
}

/* ---------- Lagerzugang dialog ---------- */

const LZ_TABS = ['LZ - Frei', 'LZ - Bestellbezogen', 'LZ - Tabellarisch'];
const LA_TABS = ['LA - Frei', 'LA - Auftragsbezogen', 'LA - Tabellarisch', 'LA - ABK', 'LA - Artikelbezogen', 'LA - Sofortauslieferung'];

const POSITION_COLUMNS = [
  { label: 'Pos. (Einkauf)', width: 'w-[66px]' },
  { label: 'Artikel-Nr. (Einkauf)', width: 'w-[160px]', arrow: true },
  { label: 'Artikelbezeichnung', width: 'w-[220px]' },
  { label: 'Lagerort', width: 'w-[100px]' },
  { label: 'Chargennummer', width: 'w-[100px]' },
  { label: 'Offen', width: 'w-[80px]' },
  { label: 'ME (ISO)', width: 'w-[60px]' },
  { label: 'Zugangsmenge', width: 'w-[90px]' },
  { label: 'Lieferant', width: 'w-[60px]' },
  { label: 'Menge in', width: 'w-[65px]' },
  { label: 'Position', width: 'w-[65px]' },
  { label: 'Bestellbezug', width: 'w-[100px]' },
  { label: 'Einlage', width: 'w-[60px]' },
];

interface ToolButtonProps {
  icon: string;
  label: string;
  size?: string;
  className?: string;
}

function ToolButton({ icon, label, size = 'w-[22px] h-[22px]', className = '' }: ToolButtonProps) {
  return (
    <button aria-label={label} className={`flex shrink-0 items-center justify-center border border-[#a0a0a0] bg-[#e1e1e1] ${size} ${className}`}>
      <Icon name={icon} className="w-4 h-4" />
    </button>
  );
}

function StockDialog() {
  return (
    <section
      role="dialog"
      aria-label="Lagerzugang tabellarisch"
      className="absolute left-[241px] right-[193px] top-[180px] bottom-0 flex flex-col border border-b-0 border-[#1b6fb5] bg-[#f0f0f0] overflow-hidden"
    >
      <header className="flex h-[31px] shrink-0 items-center bg-white pl-[9px] pb-px">
        <Icon name="cabinetTable" className="w-[15px] h-[16px]" />
        <span className="ml-[5px] text-[12px] font-['Open_Sans',sans-serif]">Lagerzugang tabellarisch</span>
        <div className="ml-auto flex">
          <button aria-label="Minimieren" className="flex w-[45px] justify-center"><Minus className="w-[14px] h-[14px]" strokeWidth={1.5} /></button>
          <button aria-label="Maximieren" className="flex w-[45px] justify-center"><Square className="w-[13px] h-[13px]" strokeWidth={2} /></button>
          <button aria-label="Schließen" className="flex w-[46px] justify-center"><X className="w-4 h-4" strokeWidth={1.5} /></button>
        </div>
      </header>

      <div className="flex h-[25px] shrink-0 items-center bg-[#5a5d6e] px-px border-b border-[#a0a0a0]">
        <ToolButton icon="windows" label="Fenster" />
        <ToolButton icon="copy" label="Kopieren" className="ml-0.5" />
        <ToolButton icon="help" label="Hilfe" className="ml-0.5" />
        <ToolButton icon="paste" label="Einfügen" className="ml-[5px]" />
        <ToolButton icon="wizard" label="Assistent" className="ml-[5px]" />
        <h1 className="flex-1 text-center text-[18px] leading-5 font-bold text-[#cdd0dc]">Lagerzugang tabellarisch</h1>
        <ToolButton icon="history" label="Verlauf" />
        <ToolButton icon="box" label="Drucken" className="ml-1" />
        <ToolButton icon="boxPlay" label="Drucken und ausführen" className="ml-px" />
      </div>

      <div className="flex h-[55px] shrink-0 border-b border-[#a0a0a0] bg-[#ffffe1]">
        <button aria-label="Hilfe" className="m-px flex w-[73px] items-center justify-center border border-[#c5c7d2] outline outline-[#5a5d6e] bg-[#5a5d6e]">
          <Icon name="help" className="w-[23px] h-[23px]" />
        </button>
        <p className="flex-1 self-center pr-1 pt-px text-center text-[12px] leading-[15px]">
          Bei der automatischen Chargennummervergabe über Wareneingangsnummer wird der Platzhalter &lt;WENR&gt; zur Anzeige verwendet.
          <br />
          Dieser wird bei Ausführung mit der tatsächlichen Wareneingangsnummer ersetzt.
        </p>
      </div>

      <div className="flex h-[23px] shrink-0 items-stretch text-[12px] font-bold">
        {LZ_TABS.map((tab, i) => (
          <button
            key={tab}
            disabled={i === 2}
            className={`w-[138px] shrink-0 pt-[2px] ${i === 2 ? 'mb-px border border-[#99d1ff] bg-[#c0dcf3] text-[#9aa0a8]' : ''}`}
          >
            {tab}
          </button>
        ))}
        <span className="ml-0.5 mr-1 my-0.5 w-px bg-[#808080]" />
        {LA_TABS.map((tab) => (
          <button key={tab} className="w-[138px] shrink-0 pt-[2px] whitespace-nowrap">{tab}</button>
        ))}
      </div>

      <div className="flex h-[115px] shrink-0 border-b border-[#a0a0a0]">
        <div className="flex w-[200px] shrink-0 flex-col items-end gap-[5px] border-t border-[#9a9cab] bg-[#bebfce] pt-3 pr-[13px] text-[13px] font-bold">
          <label htmlFor="target" className="text-[14px] leading-[18px]">Lagerzugang auf</label>
          <a href="#" className="leading-[18px] underline">Bestell-Nr.</a>
        </div>
        <div className="w-[377px] shrink-0 border border-[#6f6f77] bg-[#f0f1f4] pl-[7px] pt-3">
          <div className="flex h-[21px] w-[233px] border border-[#a8adb8] bg-white p-px">
            <select id="target" className="h-full flex-1 appearance-none border border-dotted border-[#ffa54a] bg-[#0078d7] text-[12px] leading-[15px] text-white outline-none">
              <option>Bestell-Nr.</option>
            </select>
            <span className="flex w-[17px] items-center justify-center border border-[#e0c56b] bg-gradient-to-b from-[#fff6cf] to-[#ffdd77]">
              <svg viewBox="0 0 6 4" className="w-[6px] h-1"><path d="M0 0h6L3 4z" fill="#5b5b5b" /></svg>
            </span>
          </div>
          <div className="mt-px flex items-center gap-[3px]">
            <span className="relative flex h-[23px] w-[49px] items-center border border-[#7a7a7a] bg-white">
              <select aria-label="Art" className="h-full w-full appearance-none bg-transparent pl-0.5 text-[13px] outline-none">
                <option>E</option>
              </select>
              <ChevronDown className="pointer-events-none absolute right-[3px] w-3 h-3 text-[#444]" strokeWidth={2} />
            </span>
            <span className="flex h-[21px] w-[181px] items-center border border-[#abb0bb] bg-white pr-1">
              <input aria-label="Bestell-Nr." className="h-full min-w-0 flex-1 outline-none" />
              <button aria-label="Auswählen" className="text-[9px] leading-3 text-[#555]">···</button>
            </span>
          </div>
        </div>

        <div className="flex flex-1 min-w-0 flex-col">
          <div className="flex h-[22px] shrink-0">
            <button className="flex w-[106px] items-center gap-[11px] border border-b-0 border-[#dcdcdc] bg-white pl-3 pt-px text-[12px] font-bold">
              <svg viewBox="0 0 8 8" className="w-[7px] h-[7px]"><path d="M0 0 8 4 0 8z" fill="#7a7a7a" /></svg>
              <span><u>1</u> Allgemein</span>
            </button>
          </div>
          <div className="flex flex-1 min-h-0">
            <div className="w-[200px] shrink-0 border border-[#9a9cab] bg-[#bebfce] pr-3 pt-[9px] text-right text-[14px] leading-[18px] font-bold">Optionen</div>
            <div className="flex-1 min-w-0 overflow-hidden border border-[#6f6f77] bg-[#f0f1f4] pl-[13px] pt-3">
              <label className="flex h-[15px] items-center gap-[3px] text-[12px]">
                <span className="relative flex">
                  <input type="checkbox" defaultChecked className="w-[13px] h-[13px] appearance-none border border-[#333] bg-white" />
                  <Check className="absolute left-px top-px w-[11px] h-[11px]" strokeWidth={2} />
                </span>
                Nur offene Positionen anzeigen
              </label>
              <div className="mt-[13px] flex text-[12px] leading-4 font-bold underline whitespace-nowrap">
                <a href="#" className="w-[207px] shrink-0">Bestellung</a>
                <a href="#" className="w-[143px] shrink-0">Dokument</a>
                <a href="#">ABK-Index (Auswärtsvergabe)</a>
              </div>
            </div>
          </div>
        </div>
      </div>

      <div className="flex h-[22px] shrink-0 items-center gap-0.5 bg-[#ece9d8] px-0.5">
        <ToolButton icon="table" label="Tabelle" size="w-5 h-[19px]" />
        <ToolButton icon="funnelClear" label="Filter löschen" size="w-5 h-[19px]" />
        <ToolButton icon="search" label="Suchen" size="w-5 h-[19px]" />
        <div className="ml-auto flex gap-0.5">
          <button aria-label="Übernehmen" disabled className="flex h-[19px] w-[33px] items-center justify-center border border-[#b9b9b9] bg-[#cccccc]">
            <Check className="w-4 h-4 text-[#82b898]" strokeWidth={3} />
          </button>
          <button aria-label="Verwerfen" disabled className="flex h-[19px] w-[33px] items-center justify-center border border-[#b9b9b9] bg-[#cccccc]">
            <X className="w-4 h-4 text-[#d98a7c]" strokeWidth={3} />
          </button>
          <button aria-label="Neu laden" disabled className="flex h-[19px] w-[33px] items-center justify-center border border-[#b9b9b9] bg-[#cccccc]">
            <RotateCw className="w-[15px] h-[15px] text-[#7fa3c7]" strokeWidth={3} />
          </button>
        </div>
      </div>

      <div className="flex flex-1 min-h-0 flex-col border-y border-[#868c98] bg-white">
        <table className="mt-px w-full table-fixed border-separate border-spacing-0 text-[16px] leading-5 whitespace-nowrap">
          <colgroup>
            <col className="w-[12px]" />
            {POSITION_COLUMNS.map((c) => (
              <col key={c.label} className={c.width} />
            ))}
            <col />
          </colgroup>
          <thead>
            <tr>
              <th className="h-6"><GridHandle /></th>
              <th colSpan={3} className="h-6 border-r border-[#dcdcdc] font-normal">Basisangaben</th>
              <th colSpan={10} className="font-normal">Lagerdaten</th>
              <th />
            </tr>
            <tr>
              <th className="h-6"><GridHandle /></th>
              {POSITION_COLUMNS.map((c, i) => (
                <th key={c.label} className={`h-6 pl-[3px] pr-px font-normal text-left overflow-hidden ${i < 12 ? 'border-r border-[#dcdcdc]' : ''}`}>
                  <span className="flex items-center gap-1 overflow-hidden">
                    {c.arrow && <Arrow />}
                    {c.label}
                  </span>
                </th>
              ))}
              <th />
            </tr>
          </thead>
        </table>
        <p className="flex flex-1 items-center justify-center text-[16px] text-[#6d6d6d] pt-0.5 pr-[34px]">&lt;Keine Daten vorhanden&gt;</p>
      </div>

      <footer className="flex h-[30px] shrink-0 items-start justify-end pr-1 pt-[5px] overflow-hidden">
        <label htmlFor="date" className="mr-[11px] mt-2 text-[18px] leading-[22px]">Zugangsdatum</label>
        <span className="mt-2 flex h-[23px] w-[137px] items-center border border-[#7a7a7a] bg-white pl-0.5 pr-[6px]">
          <input id="date" defaultValue="17.02.2026 14:05" className="min-w-0 flex-1 text-[11px] outline-none" />
          <Icon name="calendar" className="w-3 h-3" />
          <svg viewBox="0 0 8 5" className="ml-0.5 w-[7px] h-[5px]"><path d="M0 0h8L4 5z" fill="#3f5c94" /></svg>
        </span>
        <button aria-label="Datum wählen" className="ml-[7px] mt-2 h-[23px] w-[20px] rounded-sm border border-[#8f96a5] bg-gradient-to-b from-white via-[#e4eaf1] via-45% to-[#c4d0de]" />
        <label htmlFor="deliveryNote" className="ml-[30px] mr-[11px] mt-2 text-[18px] leading-[22px]">Lieferschein</label>
        <input id="deliveryNote" className="mt-[9px] h-[23px] w-[180px] border border-[#b2b6c0] bg-white outline-none" />
        <button className="ml-[6px] flex h-[34px] w-[162px] items-center justify-center gap-1 rounded-t-sm border border-[#8f96a5] bg-gradient-to-b from-white via-[#c9d4df] via-40% to-[#e2e8ef] text-[12px]">
          <Check className="w-4 h-4 text-[#2fb226]" strokeWidth={4} />
          Buchen
        </button>
      </footer>
    </section>
  );
}

/* ---------- Shell ---------- */

function TitleBar() {
  return (
    <header className="relative shrink-0 font-['Open_Sans',sans-serif]">
      <div className="flex h-[27px] items-center bg-white">
        <div className="flex items-center gap-px pl-[51px] pb-1">
          <button aria-label="Einkauf"><Icon name="cart" className="w-[23px] h-[23px]" /></button>
          <button aria-label="Adressen"><Icon name="book" className="w-[23px] h-[23px]" /></button>
          <button aria-label="Artikel"><Icon name="solids" className="w-[23px] h-[23px]" /></button>
          <button aria-label="System"><Icon name="server" className="w-[23px] h-[23px]" /></button>
          <svg viewBox="0 0 6 8" className="ml-1 w-[6px] h-2"><path d="M0 .5h6M0 3.500h6L3 7z" fill="#a9b0bf" stroke="#a9b0bf" strokeWidth=".6" /></svg>
        </div>
        <p className="flex-1 whitespace-pre text-center text-[12px] pb-[3px] pr-5">PRODAT ERP   [STA Angrick, Steffen @localhost:PRODAT-DEV-24]</p>
        <div className="flex items-center pb-[2px] text-[#8a8a8a]">
          <button aria-label="Minimieren" className="flex w-[45px] justify-center"><Minus className="w-3 h-3" strokeWidth={1.5} /></button>
          <button aria-label="Wiederherstellen" className="flex w-[46px] justify-center">
            <svg viewBox="0 0 11 11" className="w-[11px] h-[11px]" fill="none" stroke="currentColor">
              <path d="M.5 2.500h8v8h-8zM2.500 2.500v-2h8v8h-2" />
            </svg>
          </button>
          <button aria-label="Schließen" className="flex w-[49px] justify-center"><X className="w-[15px] h-[15px]" strokeWidth={1.5} /></button>
        </div>
      </div>
      <nav className="flex h-[27px] items-center gap-[25px] border-b border-[#9c9ca0] bg-[#484a58] pl-[62px] pt-[3px] text-[12px] text-[#c6c8d2]">
        <button>Anwendung</button>
        <button>Systemprogramme</button>
        <button>Stammdaten</button>
      </nav>
      <button
        aria-label="Anwendungsmenü"
        className="absolute left-[6px] top-1 flex w-9 h-9 items-center justify-center rounded-full border border-[#3c3e49] bg-[#c3c5d3] shadow-[inset_0_0_0_1px_#eee]"
      >
        <Icon name="prodat" className="w-6 h-6" />
      </button>
    </header>
  );
}

function SideRail() {
  return (
    <div className="relative flex w-[26px] shrink-0 flex-col items-start justify-end gap-[2px] bg-[#bebfce] pb-[2px] pl-[2px]">
      <button aria-label="Seitenleiste" className="absolute left-0 top-[609px] flex h-[190px] w-[6px] items-center rounded-r-sm border border-l-0 border-[#0a1c2c] bg-[#00588f] shadow-md">
        <span className="h-[10px] w-[2px] border-y-2 border-white" />
      </button>
      <ToolButton icon="cabinetTable" label="Lagerzugang" size="w-[22px] h-[21px]" />
      <ToolButton icon="teamlead" label="Teamlead-Center" size="w-[22px] h-[21px]" />
      <span className="my-[3px] h-[2px] w-5 shrink-0 border-t border-[#8b8c99] bg-white" />
      <ToolButton icon="listDoc" label="Liste" size="w-[22px] h-[21px]" />
      <ToolButton icon="record" label="Aufnahme" size="w-[22px] h-[21px]" />
    </div>
  );
}

function Taskbar() {
  return (
    <footer className="flex h-10 shrink-0 items-center bg-[#101010] text-[12px] text-white font-['Open_Sans',sans-serif]">
      <span className="h-4 w-[2px] bg-[#f5d36b]" />
      <button aria-label="Firefox" className="ml-[14px] flex w-12 justify-center"><Icon name="firefox" className="w-6 h-6" /></button>
      <button aria-label="Outlook" className="flex w-12 justify-center"><Icon name="outlook" className="w-[23px] h-[23px]" /></button>
      <button aria-label="PRODAT" className="ml-[2px] flex h-full w-12 items-center justify-center border-b-2 border-[#6cb4ee] bg-[#333333]">
        <Icon name="prodat" className="w-6 h-6" />
      </button>
      <div className="ml-auto flex h-full items-center">
        <span className="h-4 w-[4px] border-x border-[#4a4a4a]" />
        <span className="ml-[10px] text-[#dddddd]">Desktop</span>
        <span className="ml-[7px] self-start text-[14px] leading-[18px]">»</span>
        <ChevronUp className="ml-[9px] w-[17px] h-[17px]" strokeWidth={2} />
        <svg viewBox="0 0 17 14" className="ml-[6px] w-[17px] h-[14px]" fill="none" stroke="#fff">
          <path d="M4.500 2.500h12v7h-12zM10.500 9.500v3M7 12.500h7M.5.5h4v3h-4zM2.500 3.500v8" />
        </svg>
        <span className="ml-[10px]">DEU</span>
        <div className="ml-3 w-[58px] text-center leading-[18px]">
          <div>14:05</div>
          <div>17.02.2026</div>
        </div>
        <svg viewBox="0 0 17 16" className="ml-[14px] w-[17px] h-4" aria-hidden="true">
          <path d="M0 0h16v12H9l-4 3v-3H0z" fill="#fff" />
          <path d="M3 3.500h10M3 6.500h10M3 9.500h6" stroke="#101010" />
          <circle cx="13" cy="12" r="3.500" fill="#fff" stroke="#101010" />
        </svg>
        <span className="ml-5 mr-[3px] h-full w-px bg-[#5a5a5a]" />
      </div>
    </footer>
  );
}

export default function App() {
  return (
    <div className="flex h-screen flex-col overflow-hidden font-['Liberation_Sans',Arial,sans-serif] text-black">
      <TitleBar />
      <div className="relative flex flex-1 min-h-0 overflow-hidden bg-[#484a58]">
        <SideRail />
        <MainMenu />
        <div className="w-[51px] shrink-0" />
        <ModuleArea />

        {/* Undocked toolbar floating over the tree */}
        <div className="absolute left-[209px] top-[200px] flex h-[250px] w-[27px] justify-center border border-black bg-[#eeeeee]/90 pt-1">
          <button aria-label="Beenden" className="h-4 pr-1"><Icon name="door" className="w-[14px] h-[15px]" /></button>
        </div>

        <StockDialog />
      </div>
      <Taskbar />
    </div>
  );
}
